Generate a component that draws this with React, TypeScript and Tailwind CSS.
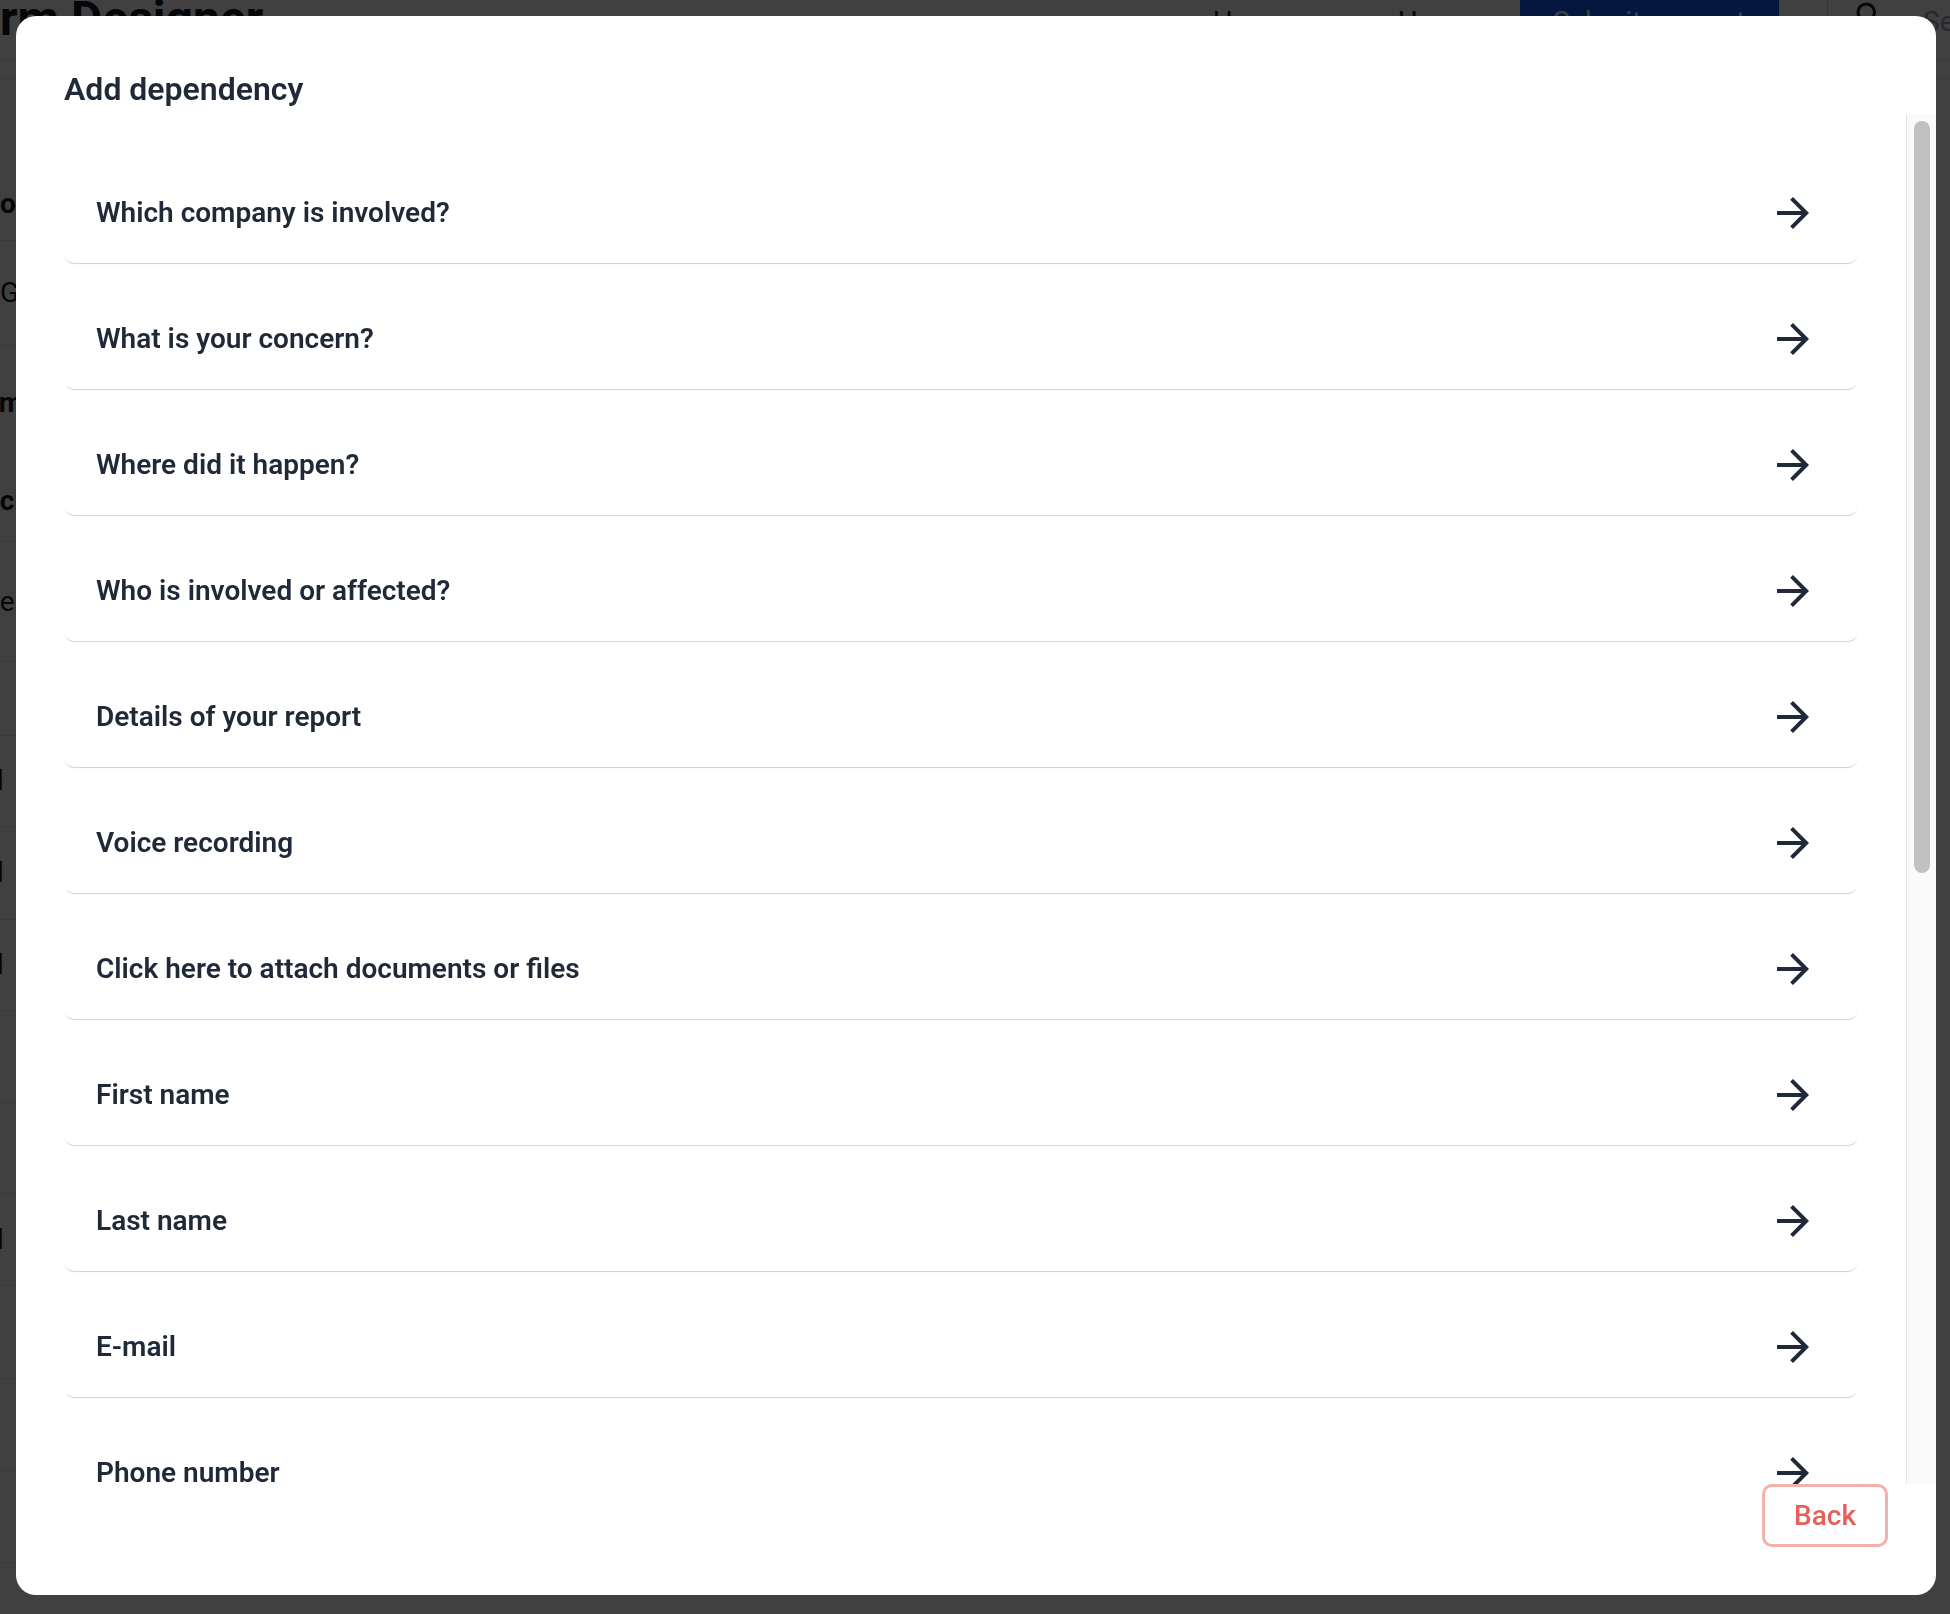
import { MdArrowForward, MdSearch } from 'react-icons/md';

const QUESTIONS: string[] = [
  'Which company is involved?',
  'What is your concern?',
  'Where did it happen?',
  'Who is involved or affected?',
  'Details of your report',
  'Voice recording',
  'Click here to attach documents or files',
  'First name',
  'Last name',
  'E-mail',
  'Phone number',
  'Preferred way of contact',
  'When did it happen?',
  'Is it still ongoing?',
  'Have you reported this before?',
  'Password',
  'Repeat password',
  'Privacy policy',
  'Consent',
];

// rows of the page behind the overlay; only their first letters peek out
const SIDE_ROWS: { label: string; cls: string }[] = [
  { label: 'Form settings', cls: 'h-[74px] font-bold -ml-[15px]' },
  { label: 'General', cls: 'h-[105px]' },
  { label: 'Email template', cls: 'h-[115px] font-bold -ml-[17px] border-transparent' },
  { label: 'Exclude', cls: 'h-[81px] font-bold -ml-[30px]' },
  { label: 'Name', cls: 'h-[120px] -ml-[60px]' },
  { label: '', cls: 'h-[74px]' },
  { label: 'l', cls: 'h-[91px] font-bold -ml-[4px]' },
  { label: 'l', cls: 'h-[93px] font-bold -ml-[4px]' },
  { label: 'l', cls: 'h-[91px] font-bold -ml-[4px]' },
  { label: '', cls: 'h-[92px]' },
  { label: '', cls: 'h-[91px]' },
  { label: 'l', cls: 'h-[92px] font-bold -ml-[4px]' },
  { label: '', cls: 'h-[93px]' },
  { label: '', cls: 'h-[92px]' },
  { label: '', cls: 'h-[92px]' },
  { label: '', cls: 'h-[92px]' },
];

function BackgroundPage() {
  return (
    <div className="h-[1614px] w-full overflow-hidden bg-white text-[#111827]">
      {/* header of the page behind the dialog */}
      <div className="flex h-[60px] items-start border-b border-gray-200">
        <h1 className="-ml-[53px] -mt-[5px] text-[48px] font-bold leading-[48px] whitespace-nowrap">Form Designer</h1>
        <nav className="ml-auto flex h-full items-start whitespace-nowrap text-[28px] leading-[44px]">
          <span className="mr-[48px]">Homepage</span>
          <span className="mr-[47px]">Home</span>
          <span className="flex h-full w-[259px] items-start bg-blue-600 pl-[33px] text-white">Submit a report</span>
          <span className="ml-[48px] h-full border-l border-gray-300" />
          <MdSearch className="ml-[24px] mt-[-2px] shrink-0" size={36} />
          <span className="ml-[35px] w-[27px] overflow-hidden text-gray-400">Search</span>
        </nav>
      </div>
      <div className="mt-[18px] h-[1px] bg-gray-200" />
      {/* sidebar rows, mostly under the dialog */}
      <div className="mt-[88px] w-[40px] overflow-hidden">
        {SIDE_ROWS.map((row, i) => (
          <div key={i} className={`flex items-center border-b border-gray-200 text-[28px] whitespace-nowrap ${row.cls}`}>
            {row.label}
          </div>
        ))}
      </div>
    </div>
  );
}

export default function App() {
  return (
    <div className="relative font-['Roboto',sans-serif]">
      <BackgroundPage />

      <div className="fixed inset-0 bg-black/75 pl-4 pt-4">
        <div className="flex h-[1579px] w-[1920px] flex-col overflow-hidden rounded-[20px] bg-white">
          <div className="px-12 pt-[49px]">
            <h2 className="text-[32px] font-semibold leading-[48px] text-[#1f2937]">Add dependency</h2>
          </div>

          {/* list + scrollbar */}
          <div className="mt-px flex min-h-0 flex-1">
            <div className="min-w-0 flex-1 overflow-hidden px-12 pt-[49px]">
              <div className="flex flex-col gap-[26px] pb-12">
                {QUESTIONS.map((q) => (
                  <button
                    key={q}
                    type="button"
                    className="flex h-[100px] w-full shrink-0 items-center justify-between rounded-[10px] bg-white pl-8 pr-[41px] text-left shadow-[0_2px_1px_-1px_rgba(0,0,0,0.14),0_1px_1px_0_rgba(0,0,0,0.05)]"
                  >
                    <span className="text-[28px] font-semibold leading-[40px] text-[#1f2937]">{q}</span>
                    <MdArrowForward className="shrink-0 text-[#1f2937]" size={48} />
                  </button>
                ))}
              </div>
            </div>
            <div className="w-[30px] shrink-0 border-l border-[#e6e6e6] bg-[#fafafa] pl-[7px] pr-[6px] pt-[7px]">
              <div className="h-[752px] rounded-full bg-[#c1c1c1]" />
            </div>
          </div>

          <div className="flex justify-end px-12 pb-12">
            <button
              type="button"
              className="flex h-[63px] w-[126px] items-center justify-center rounded-[10px] border-[3px] border-[#f2b1ab] text-[28px] font-medium text-[#e5605a]"
            >
              Back
            </button>
          </div>
        </div>
      </div>
    </div>
  );
}
